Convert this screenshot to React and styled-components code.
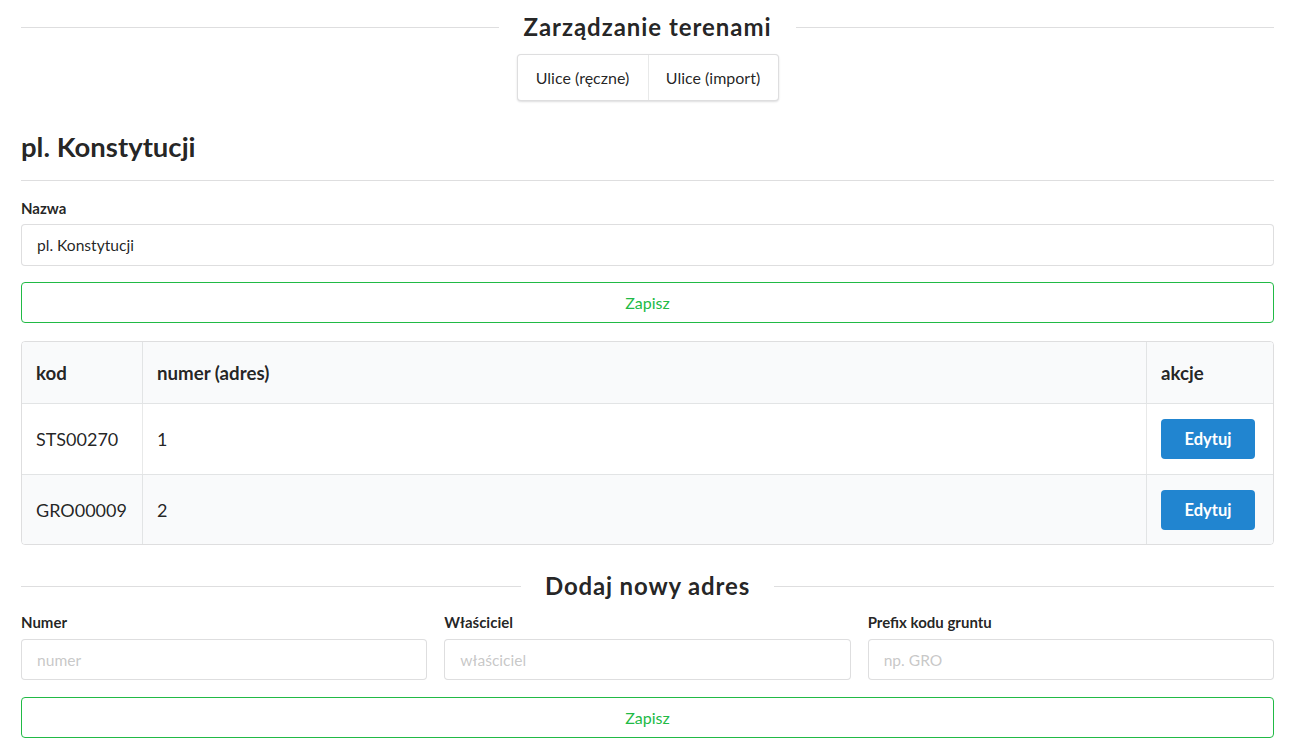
import React from "react";
import styled, { createGlobalStyle } from "styled-components";

const Global = createGlobalStyle`
  html, body { margin: 0; padding: 0; background: #fff; }
  body { font-family: Lato, "Helvetica Neue", Arial, sans-serif; color: rgba(0,0,0,0.87); font-size: 14px; }
  * { box-sizing: border-box; }
`;

const Page = styled.div`
  padding: 0 17px 0 21px;
  display: flex;
  flex-direction: column;
`;

const DividerHeader = styled.div`
  display: flex;
  align-items: center;
  gap: 24px;
  margin-top: ${p => p.$top}px;
  font-weight: 700;
  font-size: 24px;
  letter-spacing: ${p => p.$ls};
  line-height: 1;
  white-space: nowrap;
  &::before, &::after {
    content: "";
    flex: 1;
    height: 1px;
    background: rgba(34,36,38,0.15);
    box-shadow: 0 1px 0 rgba(255,255,255,0.1);
  }
`;

const MenuWrap = styled.div`
  display: flex;
  justify-content: center;
  margin-top: 15px;
`;

const Menu = styled.div`
  display: flex;
  border: 1px solid rgba(34,36,38,0.15);
  border-radius: 4px;
  box-shadow: 0 1px 2px 0 rgba(34,36,38,0.15);
  background: #fff;
`;

const MenuItem = styled.div`
  height: 45px;
  display: flex;
  align-items: center;
  font-size: 16px;
  width: 130px;
  justify-content: center;
  & + & { border-left: 1px solid rgba(34,36,38,0.1); }
`;

const Title = styled.h2`
  margin: 29px 0 0;
  font-size: 27.5px;
  font-weight: 700;
  line-height: 1.2;
  padding-bottom: 17px;
  border-bottom: 1px solid rgba(34,36,38,0.15);
`;

const Field = styled.div`
  display: flex;
  flex-direction: column;
  margin-top: ${p => p.$top || 0}px;
  min-width: 0;
`;

const Label = styled.label`
  font-size: 15px;
  font-weight: 700;
  line-height: 1;
  margin-bottom: ${p => p.$mb || 8}px;
`;

const Input = styled.input`
  width: 100%;
  height: ${p => p.$h || 42}px;
  border: 1px solid rgba(34,36,38,0.15);
  border-radius: 4px;
  padding: 0 15px;
  font-family: inherit;
  font-size: 15.6px;
  color: rgba(0,0,0,0.87);
  outline: none;
  &::placeholder { color: rgba(191,191,191,0.87); }
`;

const SaveButton = styled.button`
  width: 100%;
  height: 41px;
  margin-top: ${p => p.$top}px;
  background: #fff;
  border: 1px solid #21ba45;
  border-radius: 4px;
  color: #21ba45;
  font-family: inherit;
  font-size: 16px;
  cursor: pointer;
`;

const Table = styled.table`
  width: 100%;
  margin-top: 18px;
  border-collapse: separate;
  border-spacing: 0;
  border: 1px solid rgba(34,36,38,0.15);
  border-radius: 4px;
  font-size: 18px;
  overflow: hidden;
`;

const Th = styled.th`
  background: #f9fafb;
  text-align: left;
  font-weight: 700;
  font-size: 18.7px;
  height: 62px;
  padding: 0 14px;
  border-bottom: 1px solid rgba(34,36,38,0.1);
  width: ${p => p.$w || "auto"};
  & + & { border-left: 1px solid rgba(34,36,38,0.1); }
`;

const Tr = styled.tr`
  background: ${p => (p.$striped ? "#f9fafb" : "#fff")};
`;

const Td = styled.td`
  height: 70px;
  padding: 0 14px;
  font-weight: 400;
  border-top: ${p => (p.$sep ? "1px solid rgba(34,36,38,0.1)" : "none")};
  & + & { border-left: 1px solid rgba(34,36,38,0.1); }
`;

const BlueButton = styled.button`
  width: 94px;
  height: 40px;
  background: #2185d0;
  color: #fff;
  border: none;
  border-radius: 4px;
  font-family: inherit;
  font-weight: 700;
  font-size: 16.5px;
  cursor: pointer;
`;

const Grid = styled.div`
  display: grid;
  grid-template-columns: repeat(3, 1fr);
  gap: 17px;
  margin-top: 17px;
`;

const rows = [
  { kod: "STS00270", nr: "1" },
  { kod: "GRO00009", nr: "2" },
];

export default function App() {
  return (
    <>
      <Global />
      <Page>
        <DividerHeader $top={15} $ls="0.04em">Zarządzanie terenami</DividerHeader>
        <MenuWrap>
          <Menu>
            <MenuItem>Ulice (ręczne)</MenuItem>
            <MenuItem>Ulice (import)</MenuItem>
          </Menu>
        </MenuWrap>
        <Title>pl. Konstytucji</Title>
        <Field $top={20}>
          <Label>Nazwa</Label>
          <Input defaultValue="pl. Konstytucji" />
        </Field>
        <SaveButton $top={16}>Zapisz</SaveButton>
        <Table>
          <thead>
            <tr>
              <Th $w="120px">kod</Th>
              <Th>numer (adres)</Th>
              <Th $w="127px">akcje</Th>
            </tr>
          </thead>
          <tbody>
            {rows.map((r, i) => (
              <Tr key={r.kod} $striped={i % 2 === 1}>
                <Td $sep={i > 0}>{r.kod}</Td>
                <Td $sep={i > 0}>{r.nr}</Td>
                <Td $sep={i > 0}><BlueButton>Edytuj</BlueButton></Td>
              </Tr>
            ))}
          </tbody>
        </Table>
        <DividerHeader $top={29} $ls="0.035em">Dodaj nowy adres</DividerHeader>
        <Grid>
          <Field>
            <Label $mb={9}>Numer</Label>
            <Input $h={41} placeholder="numer" />
          </Field>
          <Field>
            <Label $mb={9}>Właściciel</Label>
            <Input $h={41} placeholder="właściciel" />
          </Field>
          <Field>
            <Label $mb={9}>Prefix kodu gruntu</Label>
            <Input $h={41} placeholder="np. GRO" />
          </Field>
        </Grid>
        <SaveButton $top={17}>Zapisz</SaveButton>
      </Page>
    </>
  );
}
